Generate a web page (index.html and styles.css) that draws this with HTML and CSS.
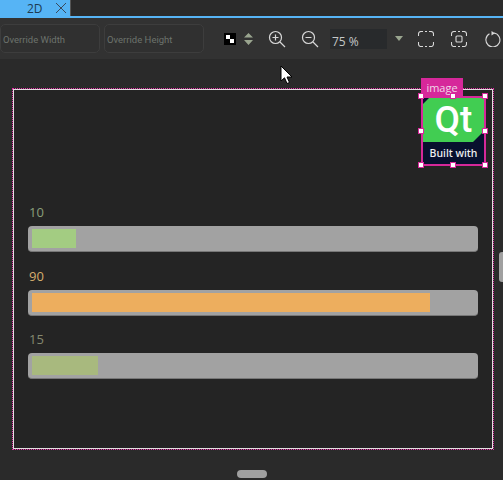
FILE: index.html
```html
<!DOCTYPE html>
<html lang="en">
<head>
  <meta charset="UTF-8" />
  <title>Form Editor 2D</title>
  <link rel="stylesheet" href="styles.css">
</head>
<body>
  <div class="tabbar">
    <div class="tab">
      <span class="tab-name">2D</span>
      <svg class="tab-close" width="12" height="12" viewBox="0 0 12 12"><path d="M1 1L11 11M11 1L1 11" stroke="#3a4a5c" stroke-width="1"/></svg>
    </div>
  </div>

  <div class="toolbar">
    <div class="override">Override Width</div>
    <div class="override">Override Height</div>
    <svg class="checker" width="12" height="12" viewBox="0 0 12 12">
      <rect width="12" height="12" fill="#000"/>
      <rect x="2" y="2" width="4" height="4" fill="#fff"/>
      <rect x="6" y="6" width="4" height="4" fill="#fff"/>
    </svg>
    <svg class="updown" width="9" height="12" viewBox="0 0 9 12"><path d="M4.5 0L9 4.5H0ZM0 7H9L4.5 12Z" fill="#9aa58f"/></svg>
    <svg class="tool zoom-in" width="18" height="18" viewBox="0 0 18 18" fill="none" stroke="#d8d8d8" stroke-width="1.2">
      <circle cx="7.5" cy="7.5" r="6"/><path d="M12 12L17 17M4.5 7.5H10.5M7.5 4.5V10.5"/>
    </svg>
    <svg class="tool zoom-out" width="18" height="18" viewBox="0 0 18 18" fill="none" stroke="#d8d8d8" stroke-width="1.2">
      <circle cx="7.5" cy="7.5" r="6"/><path d="M12 12L17 17M4.5 7.5H10.5"/>
    </svg>
    <div class="zoom-value">75 %</div>
    <svg class="zoom-arrow" width="8" height="5" viewBox="0 0 8 5"><path d="M0 0H8L4 5Z" fill="#9aa58f"/></svg>
    <svg class="tool fit" width="16" height="16" viewBox="0 0 16 16" fill="none" stroke="#d8d8d8" stroke-width="1.1">
      <path d="M5 .5H3A2.5 2.5 0 0 0 .5 3V5M11 .5H13A2.5 2.5 0 0 1 15.500 3V5M.5 11V13A2.500 2.500 0 0 0 3 15.500H5M15.500 11V13A2.500 2.500 0 0 1 13 15.500H11M7 .5H9M7 15.500H9"/>
    </svg>
    <svg class="tool fit-sel" width="16" height="16" viewBox="0 0 16 16" fill="none" stroke="#d8d8d8" stroke-width="1.1">
      <path d="M5 .5H3A2.5 2.5 0 0 0 .5 3V5M11 .5H13A2.5 2.5 0 0 1 15.500 3V5M.5 11V13A2.500 2.500 0 0 0 3 15.500H5M15.500 11V13A2.500 2.500 0 0 1 13 15.500H11M7 .5H9M7 15.500H9"/>
      <rect x="5" y="5" width="6" height="6" rx="1"/>
    </svg>
    <svg class="tool reload" width="16" height="16" viewBox="0 0 16 16" fill="none" stroke="#d8d8d8" stroke-width="1.1">
      <path d="M4.500 2.800A7 7 0 1 0 9 2"/><path d="M6.500 0V4.500L10 2.200Z" fill="#d8d8d8" stroke="none"/>
    </svg>
  </div>

  <div class="canvas">
    <div class="frame">
      <div class="gauges">
        <div class="gauge">
          <div class="gauge-label label-green">10</div>
          <div class="track"><div class="fill fill-green" style="width: 10%"></div></div>
        </div>
        <div class="gauge">
          <div class="gauge-label label-orange">90</div>
          <div class="track"><div class="fill fill-orange" style="width: 90%"></div></div>
        </div>
        <div class="gauge">
          <div class="gauge-label label-olive">15</div>
          <div class="track"><div class="fill fill-olive" style="width: 15%"></div></div>
        </div>
      </div>
    </div>

    <div class="selection">
      <div class="sel-tag">image</div>
      <div class="qt-logo">
        <div class="qt-top">Qt</div>
        <div class="qt-bottom">Built with</div>
      </div>
      <span class="handle h-tl"></span><span class="handle h-tc"></span><span class="handle h-tr"></span>
      <span class="handle h-ml"></span><span class="handle h-mr"></span>
      <span class="handle h-bl"></span><span class="handle h-bc"></span><span class="handle h-br"></span>
    </div>

    <div class="side-grip"></div>
    <div class="bottom-grip"></div>

    <svg class="cursor" width="13" height="20" viewBox="0 0 13 20">
      <path d="M1 1V16L4.500 12.800L7 18.500L9.500 17.500L7 12H12Z" fill="#fff" stroke="#000" stroke-width="1"/>
    </svg>
  </div>
</body>
</html>
```

FILE: styles.css
```css
* {
  box-sizing: border-box;
}
html, body {
  margin: 0;
  height: 100%;
}
body {
  width: 503px;
  height: 480px;
  overflow: hidden;
  background: #2a2a2a;
  font-family: 'Open Sans', sans-serif;
  display: flex;
  flex-direction: column;
}

/* tabs */
.tabbar {
  height: 18px;
  flex: none;
  background: #2a2a2a;
  border-bottom: 2px solid #56b4f5;
}
.tab {
  width: 71px;
  height: 16px;
  background: #56b4f5;
  border-right: 1px solid #555;
  display: flex;
  align-items: center;
  padding-left: 27px;
}
.tab-name {
  font-size: 12px;
  color: #1d3b52;
  width: 28px;
}
.tab-close {
  flex: none;
}

/* toolbar */
.toolbar {
  height: 41px;
  flex: none;
  background: #323232;
  display: flex;
  align-items: center;
  position: relative;
}
.override {
  width: 100px;
  height: 29px;
  margin-right: 4px;
  background: #303030;
  border: 1px solid #3d3d3d;
  border-radius: 5px;
  color: #6d736d;
  font-family: Roboto, sans-serif;
  font-size: 9.5px;
  line-height: 29px;
  padding-left: 2px;
  white-space: nowrap;
}
.checker {
  margin-left: 16px;
}
.updown {
  margin-left: 8px;
}
.zoom-in {
  margin-left: 15px;
}
.zoom-out {
  margin-left: 15px;
}
.zoom-value {
  width: 57px;
  height: 20px;
  margin-left: 11px;
  padding-left: 2px;
  background: #282a2c;
  color: #c4c8c8;
  font-size: 12px;
  line-height: 25px;
}
.zoom-arrow {
  margin-left: 8px;
}
.fit {
  margin-left: 15px;
}
.fit-sel {
  margin-left: 17px;
}
.reload {
  margin-left: 18px;
  flex: none;
}

/* canvas */
.canvas {
  flex: 1;
  position: relative;
  padding: 30px 10px 0 13px;
}
.frame {
  width: 480px;
  height: 360px;
  background: #242424;
  border: 1px solid #e4dfe2;
  outline: 1px dotted #e030a4;
  padding: 113px 14px 0 14px;
}
.gauges {
  display: flex;
  flex-direction: column;
  gap: 14.5px;
}
.gauge-label {
  font-size: 13px;
  line-height: 18px;
  height: 18px;
  margin-bottom: 5px;
  padding-left: 1px;
}
.label-green {
  color: #8a9f7a;
}
.label-orange {
  color: #d6ad6d;
}
.label-olive {
  color: #85886f;
}
.track {
  width: 450px;
  height: 26px;
  background: #a2a2a2;
  border-radius: 4px;
  border-bottom: 1px solid #777;
  padding: 3px 4px;
}
.fill {
  height: 19px;
}
.fill-green {
  background: #a3cc82;
}
.fill-orange {
  background: #edae5e;
}
.fill-olive {
  background: #a8b97e;
}

/* selected item */
.selection {
  position: absolute;
  left: 421px;
  top: 37px;
  width: 65px;
  height: 70px;
  border: 2px solid #d6289a;
}
.sel-tag {
  position: absolute;
  left: -2px;
  top: -20px;
  width: 42px;
  height: 18px;
  background: #d6289a;
  color: #f0d8e8;
  font-size: 11px;
  line-height: 20px;
  text-align: center;
}
.qt-logo {
  height: 100%;
  background: #08102e;
  display: flex;
  flex-direction: column;
}
.qt-top {
  height: 45px;
  background: #41cd52;
  color: #fff;
  font-family: Roboto, sans-serif;
  font-size: 37px;
  font-weight: 500;
  line-height: 44px;
  text-align: center;
  clip-path: polygon(6px 0, 100% 0, 100% calc(100% - 11px), calc(100% - 11px) 100%, 0 100%, 0 6px);
}
.qt-bottom {
  flex: 1;
  color: #f2f2f2;
  font-family: 'Noto Sans', sans-serif;
  font-size: 10.5px;
  font-weight: 500;
  line-height: 23px;
  text-align: center;
  white-space: nowrap;
}
.handle {
  position: absolute;
  width: 6px;
  height: 6px;
  background: #fff;
  border: 1px solid #d6289a;
}
.h-tl { left: -5px; top: -5px; }
.h-tc { left: 27px; top: -5px; }
.h-tr { right: -4px; top: -5px; }
.h-ml { left: -5px; top: 30px; }
.h-mr { right: -4px; top: 30px; }
.h-bl { left: -5px; bottom: -4px; }
.h-bc { left: 27px; bottom: -4px; }
.h-br { right: -4px; bottom: -4px; }

.side-grip {
  position: absolute;
  left: 499px;
  top: 193px;
  width: 6px;
  height: 30px;
  background: #a0a0a0;
  border-radius: 4px;
}
.bottom-grip {
  position: absolute;
  left: 237px;
  top: 411px;
  width: 30px;
  height: 8px;
  background: #a0a0a0;
  border-radius: 4px;
}
.cursor {
  position: absolute;
  left: 280px;
  top: 6px;
}
```
